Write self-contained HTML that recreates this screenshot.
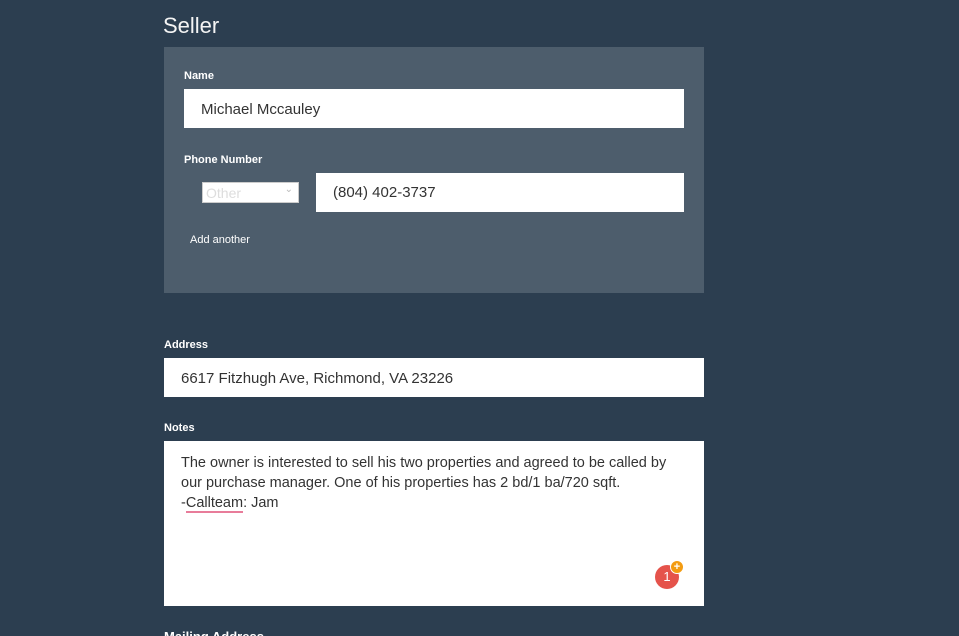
<!DOCTYPE html>
<html><head><style>
html,body{margin:0;height:636px;overflow:hidden}
body{background:#2c3e50;width:959px;font-family:"Liberation Sans",sans-serif;position:relative}
.a{position:absolute}
.lbl{font-size:11px;font-weight:bold;color:#fff}
.inp{background:#fff;color:#333;font-size:15px;box-sizing:border-box}
</style></head><body>
<div class="a" style="left:163px;top:13px;font-size:22px;color:#f4f4f4">Seller</div>
<div class="a" style="left:164px;top:47px;width:540px;height:246px;background:#4d5d6c"></div>
<div class="a lbl" style="left:184px;top:70px">Name</div>
<div class="a inp" style="left:184px;top:89px;width:500px;height:39px;padding:12px 17px">Michael Mccauley</div>
<div class="a lbl" style="left:184px;top:154px">Phone Number</div>
<div class="a" style="left:202px;top:182px;width:97px;height:21px;background:#fff;border:1px solid #ccc;box-sizing:border-box;color:#ddd;font-size:14px;padding:2px 3px">Other<span style="position:absolute;right:5px;top:1px;font-size:10px;color:#bbb">&#8964;</span></div>
<div class="a inp" style="left:316px;top:173px;width:368px;height:39px;padding:11px 17px">(804) 402-3737</div>
<div class="a" style="left:190px;top:234px;font-size:11px;color:#fff">Add another</div>
<div class="a lbl" style="left:164px;top:339px">Address</div>
<div class="a inp" style="left:164px;top:358px;width:540px;height:39px;padding:12px 17px">6617 Fitzhugh Ave, Richmond, VA 23226</div>
<div class="a lbl" style="left:164px;top:422px">Notes</div>
<div class="a inp" style="left:164px;top:441px;width:540px;height:165px;padding:12px 17px;font-size:14.5px;line-height:20px">The owner is interested to sell his two properties and agreed to be called by our purchase manager. One of his properties has 2 bd/1 ba/720 sqft.<br>-<span style="border-bottom:2px solid #e87c9a">Callteam</span>: Jam</div>
<div class="a" style="left:655px;top:565px;width:24px;height:24px;border-radius:50%;background:#e5534b;color:#fff;font-size:13px;text-align:center;line-height:24px">1</div>
<div class="a" style="left:670px;top:560px;width:12px;height:12px;border-radius:50%;background:#f39c12;border:1px solid #fff;color:#fff;font-size:11px;font-weight:bold;text-align:center;line-height:12px">+</div>
<div class="a lbl" style="left:164px;top:629px;font-size:13px">Mailing Address</div>
</body></html>
